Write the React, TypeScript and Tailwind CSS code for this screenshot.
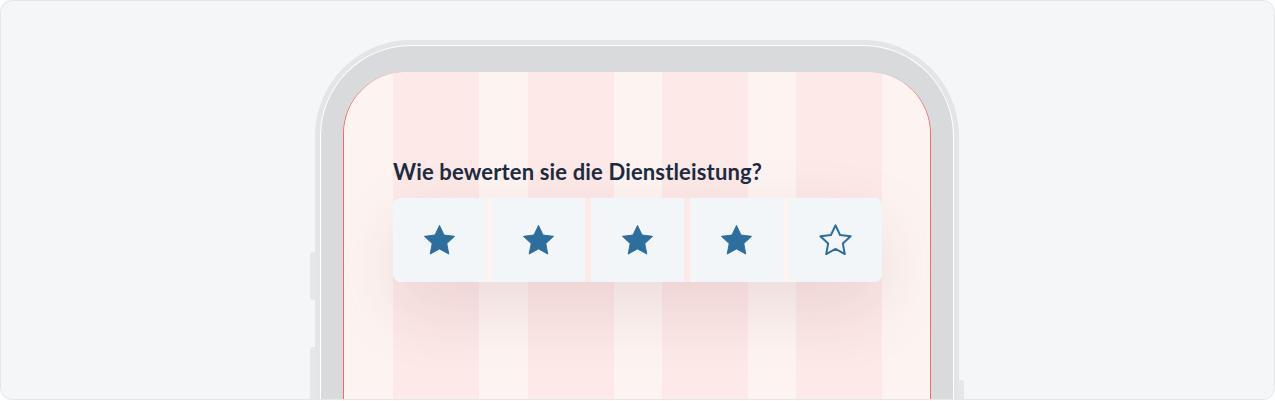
import React from "react";

const stripes = [
  { w: "w-[49px]", c: "bg-[#fdf4f2]" },
  { w: "w-[86px]", c: "bg-[#fce9e8]" },
  { w: "w-[49px]", c: "bg-[#fdf4f2]" },
  { w: "w-[86px]", c: "bg-[#fce9e8]" },
  { w: "w-[48px]", c: "bg-[#fdf4f2]" },
  { w: "w-[86px]", c: "bg-[#fce9e8]" },
  { w: "w-[48px]", c: "bg-[#fdf4f2]" },
  { w: "w-[86px]", c: "bg-[#fce9e8]" },
  { w: "w-[48px]", c: "bg-[#fdf4f2]" },
];

function Star({ filled }: { filled: boolean }) {
  return (
    <svg width="37" height="37" viewBox="0 0 24 24" aria-hidden="true">
      <polygon
        points="12,2.2 14.95,8.45 21.8,9.3 16.75,14 18.05,20.8 12,17.45 5.95,20.8 7.25,14 2.2,9.3 9.05,8.45"
        fill={filled ? "#2d6e9e" : "none"}
        stroke="#2d6e9e"
        strokeWidth={filled ? 0.6 : 1.3}
        strokeLinejoin="round"
      />
    </svg>
  );
}

export default function App() {
  const ratings = [true, true, true, true, false];
  return (
    <div className="w-[1275px] h-[401px] bg-white">
      <div
        className="relative w-[1275px] h-[400px] bg-[#f5f6f8] border border-[#e4e6ea] rounded-[12px] overflow-hidden flex justify-center pt-[39px]"
        style={{ fontFamily: "Lato, 'Noto Sans', sans-serif" }}
      >
        <div className="relative ml-[-1px]">
          {/* side buttons */}
          <div className="absolute left-[-5px] top-[212px] w-[6px] h-[48px] rounded-l-[3px] bg-[#e6e7e8]" />
          <div className="absolute left-[-5px] top-[307px] w-[6px] h-[80px] rounded-l-[3px] bg-[#e6e7e8]" />
          <div className="absolute right-[-5px] top-[340px] w-[6px] h-[60px] rounded-r-[3px] bg-[#e6e7e8]" />
          <div className="w-[644px] h-[400px] rounded-t-[96px] bg-[#e4e5e6] pt-[5px] px-[5px]">
            <div className="h-full rounded-t-[91px] bg-[#d9dadb] border-t border-x border-white pt-[26px] px-[22px]">
              <div className="relative h-full rounded-t-[62px] border-x border-[#f06a6a] overflow-hidden">
                <div className="absolute inset-0 flex">
                  {stripes.map((s, i) => (
                    <div key={i} className={`${s.w} ${s.c} h-full shrink-0`} />
                  ))}
                </div>
                <div className="relative px-[49px] pt-[86px]">
                  <div className="text-[22px] leading-[28px] font-bold text-[#1d2b40] tracking-[0.15px]">
                    Wie bewerten sie die Dienstleistung?
                  </div>
                  <div className="mt-[12px] flex gap-[6px] w-[489px] rounded-[8px] shadow-[0_26px_70px_rgba(110,40,40,0.12)]">
                    {ratings.map((f, i) => (
                      <div
                        key={i}
                        className={`w-[93px] h-[84px] shrink-0 bg-[#f2f6f9] flex items-center justify-center ${
                          i === 0 ? "rounded-l-[8px]" : ""
                        } ${i === 4 ? "rounded-r-[8px]" : ""}`}
                      >
                        <Star filled={f} />
                      </div>
                    ))}
                  </div>
                </div>
              </div>
            </div>
          </div>
        </div>
      </div>
    </div>
  );
}
